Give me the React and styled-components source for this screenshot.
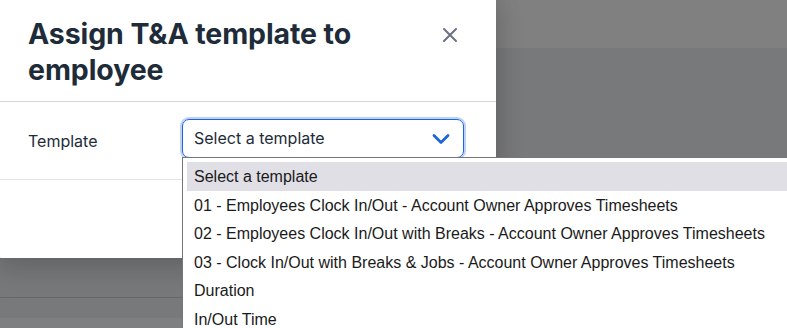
import styled, { createGlobalStyle } from "styled-components";

const options = [
  "Select a template",
  "01 - Employees Clock In/Out - Account Owner Approves Timesheets",
  "02 - Employees Clock In/Out with Breaks - Account Owner Approves Timesheets",
  "03 - Clock In/Out with Breaks & Jobs - Account Owner Approves Timesheets",
  "Duration",
  "In/Out Time",
];

const GlobalStyle = createGlobalStyle`
  html, body {
    margin: 0;
    padding: 0;
    width: 787px;
    height: 328px;
    overflow: hidden;
    background: #78797b;
  }
  * { box-sizing: border-box; }
`;

const App = () => {
  return (
    <>
      <GlobalStyle />
      <Page>
        {/* dimmed page behind the dialog */}
        <TopBand />
        <Band $h={249} $bg="#78797b" />
        <Band $h={1} $bg="#666769" />
        <Band $h={20} $bg="#78797b" />
        <Band $h={20} $bg="#7e7f81" />

        {/* Dialog */}
        <Modal>
          <ModalHeader>
            <Title>Assign T&amp;A template to employee</Title>
            <CloseButton aria-label="Close">
              <svg width="14" height="14" viewBox="0 0 14 14">
                <path
                  d="M1 1 L13 13 M13 1 L1 13"
                  stroke="#6b7280"
                  strokeWidth="2"
                  strokeLinecap="round"
                />
              </svg>
            </CloseButton>
          </ModalHeader>
          <ModalBody>
            <Label>Template</Label>
            <SelectBox>
              <SelectText>Select a template</SelectText>
              <svg width="18" height="12" viewBox="0 0 18 12">
                <path
                  d="M2 2.5 L9 9.5 L16 2.5"
                  fill="none"
                  stroke="#1b66d8"
                  strokeWidth="2.8"
                  strokeLinecap="round"
                  strokeLinejoin="round"
                />
              </svg>
            </SelectBox>
          </ModalBody>
          <ModalFooter />
        </Modal>

        {/* Native-looking option list */}
        <OptionList>
          {options.map((opt, i) => (
            <Option key={opt} $active={i === 0}>
              {opt}
            </Option>
          ))}
        </OptionList>
      </Page>
    </>
  );
};

const Page = styled.div`
  position: relative;
  width: 787px;
  height: 328px;
  overflow: hidden;
  display: flex;
  flex-direction: column;
`;

const TopBand = styled.div`
  height: 48px;
  background: #808080;
  flex-shrink: 0;
`;

const Band = styled.div`
  height: ${(p) => p.$h}px;
  background: ${(p) => p.$bg};
  flex-shrink: 0;
`;

const Modal = styled.div`
  position: absolute;
  left: -6px;
  top: -8px;
  width: 502px;
  height: 266px;
  background: #fff;
  border-radius: 8px;
  box-shadow: 0 12px 30px rgba(0, 0, 0, 0.14), 4px 0 24px rgba(0, 0, 0, 0.08);
  font-family: Inter, "Noto Sans", sans-serif;
  color: #1f2d3d;
`;

const ModalHeader = styled.div`
  display: flex;
  justify-content: space-between;
  align-items: flex-start;
  padding: 24px 39px 0 34px;
  height: 110px;
  border-bottom: 1px solid #cdd8e1;
`;

const Title = styled.h2`
  margin: 0;
  width: 370px;
  font-size: 28.5px;
  line-height: 36px;
  font-weight: 700;
  letter-spacing: -0.1px;
  color: #1e2c3a;
`;

const CloseButton = styled.button`
  border: none;
  background: none;
  padding: 0;
  margin-top: 12px;
  width: 14px;
  height: 14px;
  display: flex;
  cursor: pointer;
`;

const ModalBody = styled.div`
  display: flex;
  padding: 17px 0 0 34px;
  height: 78px;
  border-bottom: 1px solid #e4e4e4;
  align-items: flex-start;
`;

const Label = styled.div`
  width: 154px;
  font-size: 16px;
  line-height: 20px;
  margin-top: 12px;
  color: #1e2c3a;
`;

const SelectBox = styled.div`
  width: 282px;
  height: 39px;
  border: 1px solid #1d63d9;
  border-radius: 7px;
  box-shadow: 0 0 0 2px #bcd3f6;
  display: flex;
  align-items: center;
  justify-content: space-between;
  padding: 0 13px 0 11px;
`;

const SelectText = styled.span`
  font-size: 16px;
  color: #1e2c3a;
  margin-top: -1px;
`;

const ModalFooter = styled.div``;

const OptionList = styled.div`
  position: absolute;
  left: 182px;
  top: 157px;
  width: 620px;
  border: 1px solid #767676;
  border-right: none;
  background: #fff;
  padding: 4px 0 0 4px;
  font-family: "Liberation Sans", Arial, sans-serif;
  font-size: 16px;
  color: #1a1a1a;
`;

const Option = styled.div`
  height: 28.6px;
  line-height: 30px;
  padding-left: 7px;
  white-space: nowrap;
  background: ${(p) => (p.$active ? "#e0dfe6" : "transparent")};
`;

export default App;
